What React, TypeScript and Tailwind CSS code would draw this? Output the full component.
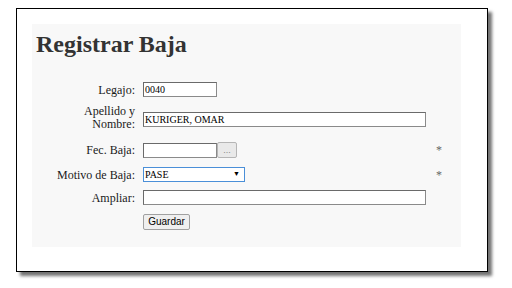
import React from "react";

const inputCls =
  "h-[15px] bg-white border border-[#8a8a8a] border-t-[#6a6a6a] border-l-[#6a6a6a] pl-[1px] text-[10px] leading-[13px] text-black font-['Liberation_Serif',serif] flex items-center";

function Row({
  label,
  h,
  children,
  star,
  labelCls = "leading-[12px]",
}: {
  label: React.ReactNode;
  h: string;
  children?: React.ReactNode;
  star?: boolean;
  labelCls?: string;
}) {
  return (
    <div className={`flex items-center ${h}`}>
      <div className={`w-[103px] text-right ${labelCls}`}>{label}</div>
      <div className="ml-[8px] w-[283px] flex items-center">{children}</div>
      {star && <div className="ml-[10px] text-[#666] leading-[12px]">*</div>}
    </div>
  );
}

export default function App() {
  return (
    <div className="w-[512px] h-[288px] bg-white pt-[8px] pl-[16px] font-['Liberation_Serif',serif]">
      <div className="w-[472px] h-[264px] border border-black bg-white pt-[15px] pl-[15px] shadow-[4px_4px_3px_rgba(0,0,0,0.55)]">
        <div className="w-[429px] h-[223px] bg-[#f8f8f8]">
          <h1 className="pl-[4px] pt-[8px] text-[24px] leading-[24px] font-bold text-[#333]">
            Registrar Baja
          </h1>
          <div className="mt-[22px] flex flex-col text-[12px] text-[#1a1a1a]">
            <Row label="Legajo:" h="h-[23px]">
              <div className={`${inputCls} w-[74px]`}>0040</div>
            </Row>
            <Row
              label={
                <>
                  Apellido y
                  <br />
                  Nombre:
                </>
              }
              h="h-[37px]"
              labelCls="leading-[13px] mb-[4px]"
            >
              <div className={`${inputCls} w-[283px]`}>KURIGER, OMAR</div>
            </Row>
            <Row label="Fec. Baja:" h="h-[24px]" star>
              <div className={`${inputCls} w-[74px]`}></div>
              <div className="w-[20px] h-[16px] bg-[#e9e9e9] border border-[#b5b5b5] rounded-[2px] text-[9px] leading-[12px] text-[#888] flex items-center justify-center font-['Liberation_Sans',sans-serif]">
                ...
              </div>
            </Row>
            <Row label="Motivo de Baja:" h="h-[25px]" star>
              <div className="w-[102px] h-[15px] bg-white border border-[#4a8fd8] pl-[1px] pr-[4px] flex items-center justify-between text-[10px] leading-[13px] text-black">
                <span>PASE</span>
                <span className="text-[7px] leading-none">▼</span>
              </div>
            </Row>
            <Row label="Ampliar:" h="h-[21px]">
              <div className={`${inputCls} w-[283px]`}></div>
            </Row>
            <Row label="" h="h-[28px]">
              <div className="w-[47px] h-[16px] bg-[#efefef] border border-[#a0a0a0] rounded-[2px] flex items-center justify-center text-[10px] leading-none text-black font-['Liberation_Sans',sans-serif]">
                Guardar
              </div>
            </Row>
          </div>
        </div>
      </div>
    </div>
  );
}
